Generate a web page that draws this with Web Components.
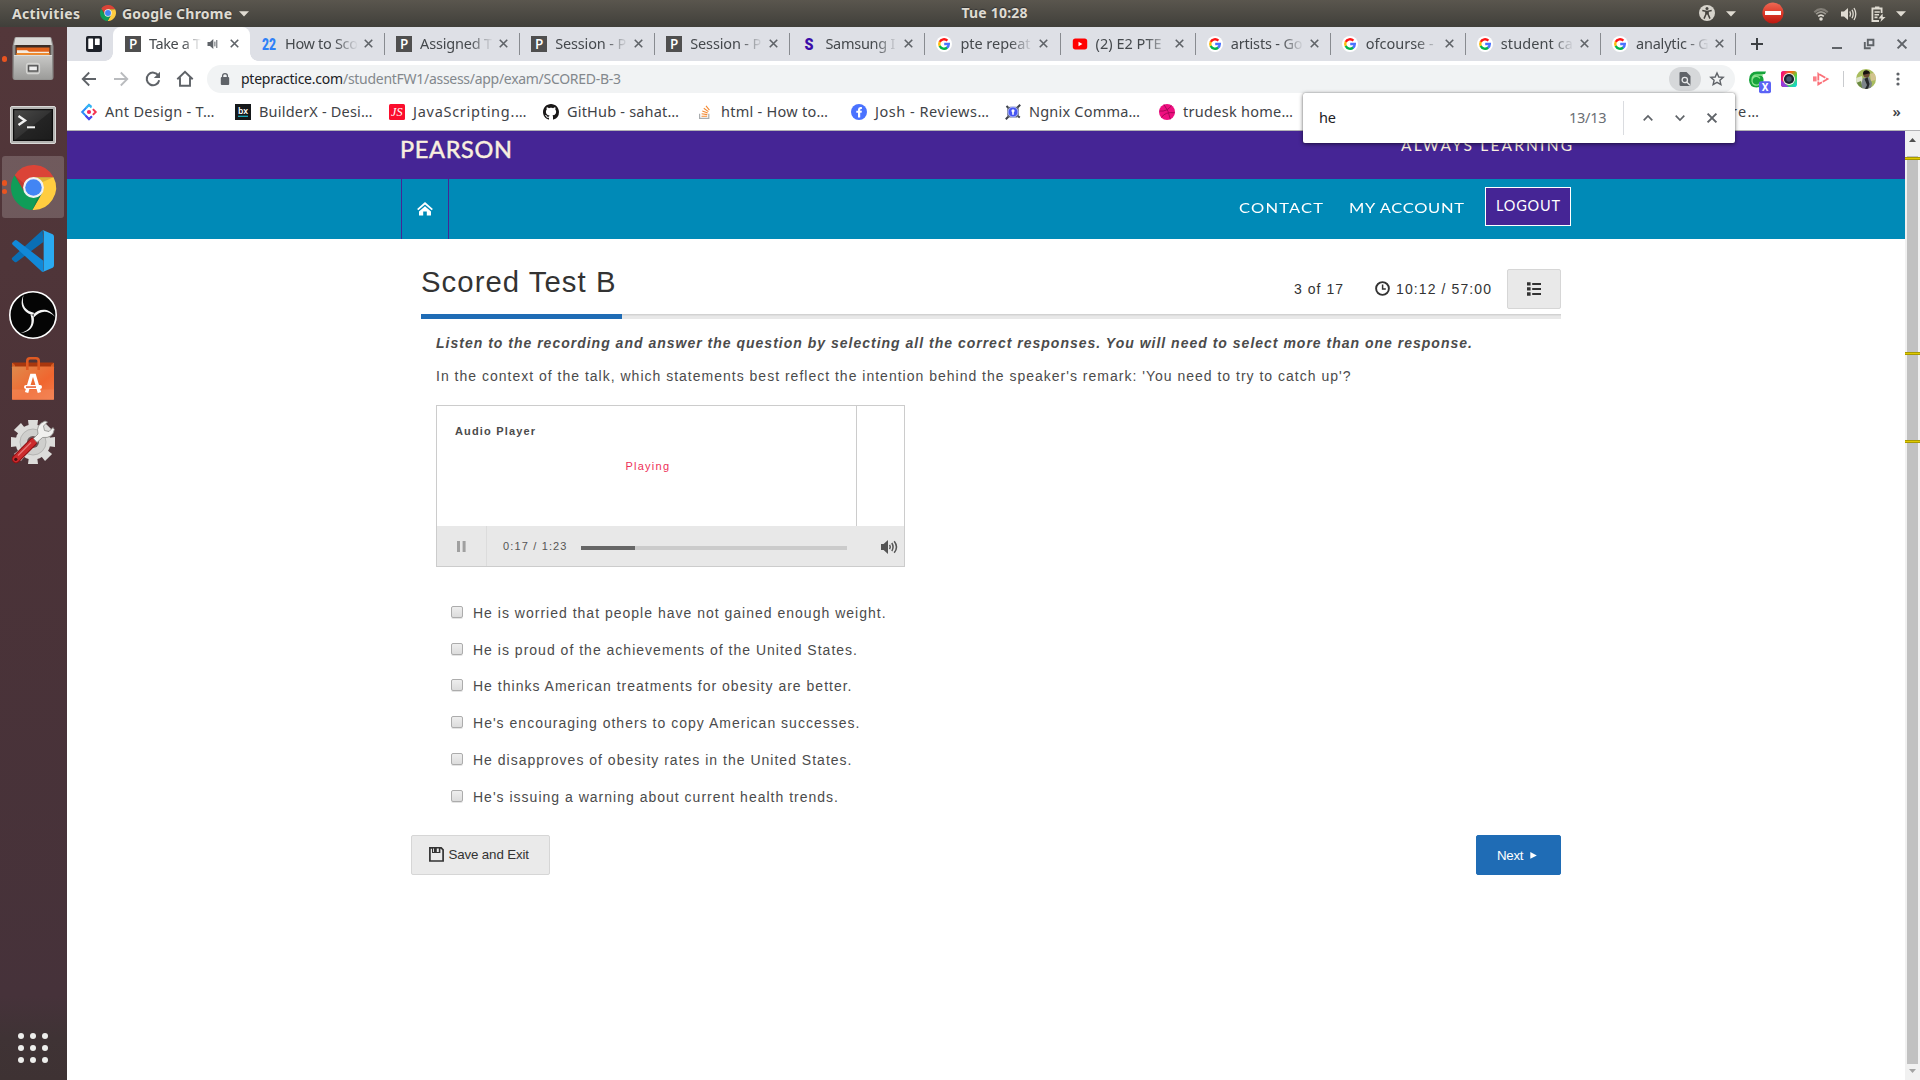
<!DOCTYPE html>
<html lang="en">
<head>
<meta charset="utf-8">
<title>Scored Test B</title>
<style>
html,body{margin:0;padding:0;width:1920px;height:1080px;overflow:hidden;background:#fff}
</style>
</head>
<body>
<desk-top></desk-top>
<script>
const UI = '"Noto Sans","Open Sans",sans-serif';
const TXT = '"Liberation Sans",Arial,sans-serif';

const CHROME = '<path fill="#db4437" d="M5.54 12.03A22 22 0 0 1 43.6 14H24V24L15.34 29Z"/><path fill="#ffcd40" d="M43.6 14A22 22 0 0 1 22.86 45.97L32.66 29 24 24V14Z"/><path fill="#0f9d58" d="M22.86 45.97A22 22 0 0 1 5.54 12.03L15.34 29 24 24 32.66 29Z"/><path fill="#000" opacity=".13" d="M24 14H43.6L33 18.5ZM15.34 29 5.54 12.03 17 22ZM32.66 29 22.86 45.97 28 33Z"/><circle cx="24" cy="24" r="10.2" fill="#f1f1f1"/><circle cx="24" cy="24" r="8.1" fill="#4285f4"/>';
const CLOSE = 'M4 4 12 12M12 4 4 12';

// name: [viewBox, markup]
const ICONS = {
  chrome: ['2 2 44 44', CHROME],
  caret: ['0 0 10 6', '<path fill="#dfdbd2" d="M0 .3H10L5 5.5Z"/>'],
  access: ['0 0 16 16', '<circle cx="8" cy="8" r="8" fill="#d6d3cb"/><circle cx="8" cy="3.6" r="1.5" fill="#45433e"/><path d="M3.3 5.6 8 6.6 12.7 5.6M8 6.5V9.5M6.9 6.6V9.4L5 13.6M9.1 6.6V9.4L11 13.6" stroke="#45433e" stroke-width="1.5" fill="none"/>'],
  stop: ['0 0 22 22', '<defs><linearGradient id="a" x2="0" y2="1"><stop stop-color="#ee6a55"/><stop offset=".5" stop-color="#dd3a2a"/><stop offset="1" stop-color="#bb1710"/></linearGradient></defs><circle cx="11" cy="11" r="10.6" fill="url(#a)"/><rect x="3" y="9" width="16" height="4" fill="#fff"/>'],
  wifi: ['0 0 16 14', '<g fill="none" stroke="#dfdbd2"><path d="M1.3 5.2Q8-1 14.7 5.2" stroke-width="2" opacity=".35"/><path d="M3.2 7.2Q8 2.6 12.8 7.2" stroke-width="1.8" opacity=".55"/><path d="M5.2 9.3Q8 6.8 10.8 9.3" stroke-width="1.7"/></g><circle cx="8" cy="12" r="1.8" fill="#dfdbd2"/>'],
  sound: ['0 0 16 14', '<path fill="#dfdbd2" d="M0 4.5H3L7 1V13L3 9.5H0Z"/><g fill="none" stroke="#dfdbd2" stroke-width="1.3"><path d="M8.8 4.4Q10.4 7 8.8 9.6"/><path d="M11 2.7Q13.4 7 11 11.3"/><path d="M13 1Q16.6 7 13 13"/></g>'],
  battery: ['0 0 15 16', '<path fill="none" stroke="#dfdbd2" stroke-width="1.8" d="M8 15H1.4V2.5H10.6V7"/><path d="M4 1.2H8.4M3.5 6H8.8M3.5 8.7H8M3.5 11.4H6.5" stroke="#dfdbd2" stroke-width="1.6"/><path fill="#dfdbd2" d="M11.5 7.5 7.6 12.4H10.4L9.4 16 14.6 11H11.8Z"/>'],
  files: ['0 0 42 44', '<defs><linearGradient id="a" x2="0" y2="1"><stop stop-color="#c9c9c7"/><stop offset="1" stop-color="#9b9b99"/></linearGradient></defs><path fill="#8e8d8b" d="M2 2.5Q2 0 4 0H38Q40 0 40 2.5L41.5 9V40Q41.5 43 39 43H3Q.5 43 .5 40V9Z"/><path fill="#d9d9d7" d="M3.5.6H38.5L40 8H2Z"/><path fill="#3c2d25" d="M3.5 8H38.5V20H3.5Z"/><path fill="#e2641c" d="M4.5 10.5H37.5V20H4.5Z"/><path fill="#f5ece0" d="M5 13.2H15L17 14.8H37V16.5H5Z"/><path fill="#ec8a30" d="M4.5 16H37.5V20H4.5Z"/><path fill="url(#a)" d="M2 18H40V41Q40 42.5 38.5 42.5H3.5Q2 42.5 2 41Z"/><path d="M2 18.5H40" stroke="#dededc"/><rect x="14.5" y="26.3" width="13" height="10.4" rx="2.5" fill="#b7b7b5" stroke="#d5d5d3" stroke-width="1.2"/><rect x="16.6" y="28.8" width="9" height="5.2" fill="#eee" stroke="#555" stroke-width="1.4"/>'],
  terminal: ['0 0 46 38', '<defs><linearGradient id="a" x2="1" y2="1"><stop stop-color="#4a4a49"/><stop offset=".5" stop-color="#333"/><stop offset=".52" stop-color="#242424"/><stop offset="1" stop-color="#1c1c1c"/></linearGradient></defs><rect x=".5" y=".5" width="45" height="37" rx="1.5" fill="#b3b3b1" stroke="#dadad8"/><rect x="3.6" y="3.6" width="38.8" height="30.8" fill="url(#a)" stroke="#0c0c0c" stroke-width="1.2"/><path d="M8.5 10 15 14.5 8.5 19" stroke="#f2f2f2" stroke-width="2.4" fill="none"/><path d="M17 21.3H25" stroke="#f2f2f2" stroke-width="2"/>'],
  vscode: ['0 0 126 126', '<path fill="#0a6fb5" d="M92 0 0 84Q-2 88 2 91L8 96Q11 98 15 95L94 36Z"/><path fill="#1189d8" d="M3 36 9 31Q12 29 16 32L94 92V126L90 125 2 44Q-2 40 3 36Z"/><path fill="#2aaaf2" d="M92 0 122 13Q126 15 126 20V106Q126 111 122 113L92 126Q95 124 95 119V7Q95 2 92 0Z"/>'],
  obs: ['-24 -24 48 48', '<circle r="23.2" fill="#050505" stroke="#fff" stroke-width="1.6"/><g fill="#f4f4f4"><path d="M-9.5-20C-15-8-7-1.8-1 0L1.5-2C-7-4-12-9-9.5-20Z"/><path d="M-9.5-20C-15-8-7-1.8-1 0L1.5-2C-7-4-12-9-9.5-20Z" transform="rotate(120)"/><path d="M-9.5-20C-15-8-7-1.8-1 0L1.5-2C-7-4-12-9-9.5-20Z" transform="rotate(240)"/></g>'],
  software: ['0 0 42 44', '<defs><linearGradient id="a" x2="1" y2="1"><stop stop-color="#e08a4c"/><stop offset=".6" stop-color="#f0662f"/><stop offset="1" stop-color="#f27a4a"/></linearGradient></defs><path fill="#a8370e" d="M1 5.5H41L42 10H0Z"/><path fill="#d35b22" d="M0 5.5 3 8V10H0ZM42 5.5 39 8V10H42Z"/><rect y="9.5" width="42" height="33.2" rx=".8" fill="url(#a)"/><rect y="32.5" width="42" height="10.2" fill="#f59064" opacity=".45"/><path d="M15.3 13V4Q15.3 1.2 18 1.2H24Q26.7 1.2 26.7 4V13" fill="none" stroke="#e05a22" stroke-width="2.6"/><path d="M14.6 35.5 19.6 18.5H22.4L27.4 35.5" fill="none" stroke="#fff" stroke-width="3.4"/><rect x="12" y="28" width="18" height="4" rx="2" fill="#fff"/><rect x="14" y="29.3" width="10" height="1.5" fill="#e8592a"/>'],
  settings: ['0 0 44 44', '<g fill="#dcdcda"><circle cx="22" cy="22" r="17.5"/><path d="M17 0H27L26 8H18ZM17 44H27L26 36H18ZM0 17V27L8 26V18ZM44 17V27L36 26V18Z"/><path d="M17 0H27L26 8H18ZM17 44H27L26 36H18ZM0 17V27L8 26V18ZM44 17V27L36 26V18Z" transform="rotate(45 22 22)"/></g><circle cx="22" cy="22" r="13" fill="#cfcfcd" stroke="#b5b5b3"/><circle cx="22" cy="22" r="6" fill="#6b5658"/><path d="M5 39 22 22" stroke="#8e1114" stroke-width="8.4" stroke-linecap="round"/><path d="M5 39 22 22" stroke="#cc2b2d" stroke-width="6.4" stroke-linecap="round"/><path d="M7 35.5 20 22.5" stroke="#e87878" stroke-width="1.2"/><circle cx="4.8" cy="39.3" r="1.6" fill="#4b1012"/><path fill="#f0f0ee" stroke="#8a8a88" stroke-width=".8" d="M22.5 18.5 27 14Q24.5 4.5 34 1L36.5 2 32.5 6 33.5 10.5 38 11.5 42 7.5 43.3 9.5Q42 18.5 31.5 17.5L26 22.5Z"/>'],
  trello: ['0 0 16 16', '<rect width="16" height="16" rx="2" fill="#1d2129"/><rect x="2.3" y="2.5" width="4.8" height="10.5" rx=".6" fill="#fff"/><rect x="8.9" y="2.5" width="4.8" height="6.6" rx=".6" fill="#fff"/>'],
  pearson: ['0 0 16 16', '<rect width="16" height="16" fill="#4f4f4f"/><text x="4" y="13" font-family="Open Sans" font-size="13.5" font-weight="600" fill="#fff">P</text>'],
  n22: ['0 0 16 16', '<text x="1" y="14" font-family="Roboto" font-size="17" font-weight="900" fill="#2f80f7" textLength="14" lengthAdjust="spacingAndGlyphs">22</text>'],
  samsung: ['0 0 16 16', '<text x="3.5" y="14" font-family="Roboto" font-size="17" font-weight="900" fill="#3a0ca8" textLength="9" lengthAdjust="spacingAndGlyphs">S</text>'],
  google: ['0 0 16 16', '<circle cx="8" cy="8" r="8" fill="#fff"/><g fill="none" stroke-width="2.4"><path stroke="#ff1717" d="M11.4 4.6A4.8 4.8 0 0 0 3.7 6"/><path stroke="#fdbc10" d="M3.8 5.7A4.9 4.9 0 0 0 3.8 10.3"/><path stroke="#00b44b" d="M3.7 10A4.8 4.8 0 0 0 11.2 11.5"/><path stroke="#4a72ff" d="M8.2 8H12.8Q12.8 10.3 11 11.7"/></g>'],
  youtube: ['0 0 16 16', '<rect x=".8" y="2.4" width="14.4" height="11" rx="2.6" fill="#f00"/><path fill="#fff" d="M6.5 5.7 10.4 8 6.5 10.2Z"/>'],
  close: ['0 0 16 16', `<path d="${CLOSE}" stroke="#5f6368" stroke-width="1.7"/>`],
  audio: ['0 0 12 12', '<path fill="#5f6368" d="M.5 4H3L6.3 1V11L3 8H.5Z"/><path d="M7.9 3.6V8.4M9.8 2V10" stroke="#5f6368" stroke-width="1"/>'],
  plus: ['0 0 16 16', '<path d="M8 2V14M2 8H14" stroke="#3c4043" stroke-width="2"/>'],
  min: ['0 0 16 16', '<path d="M3 12H13" stroke="#5f6368" stroke-width="2"/>'],
  restore: ['0 0 16 16', '<path d="M6.8 3.8H12.4V9.3H6.8ZM3.8 6V12.2H9.7" fill="none" stroke="#5f6368" stroke-width="1.9"/>'],
  wclose: ['0 0 16 16', '<path d="M3.6 3.6 12.4 12.4M12.4 3.6 3.6 12.4" stroke="#5f6368" stroke-width="2"/>'],
  back: ['0 0 16 16', '<path d="M15 8H2M8.2 1.5 1.7 8 8.2 14.5" fill="none" stroke="#5f6368" stroke-width="1.8"/>'],
  forward: ['0 0 16 16', '<path d="M1 8H14M7.8 1.5 14.3 8 7.8 14.5" fill="none" stroke="#b9bbbe" stroke-width="1.8"/>'],
  reload: ['0 0 16 16', '<path d="M13.4 4.6A6.3 6.3 0 1 0 14.2 9.2" fill="none" stroke="#5f6368" stroke-width="2"/><path fill="#5f6368" d="M15 .8V7H8.8Z"/>'],
  home: ['0 0 18 18', '<path d="M1.3 9.3 9 1.8 16.7 9.3M4 7.5V15.7H14V7.5" fill="none" stroke="#5f6368" stroke-width="1.9"/>'],
  lock: ['0 0 10 14', '<rect x=".8" y="5" width="8.4" height="8" rx="1" fill="#5f6368"/><path d="M2.6 5.5V3.8Q2.6 1.6 5 1.6T7.4 3.8V5.5" fill="none" stroke="#5f6368" stroke-width="1.3"/>'],
  finddoc: ['0 0 12 14', '<path fill="#5f6368" d="M1.5 0H7.5L11.5 4V12.5Q11.5 14 10 14H2Q.5 14 .5 12.5V1Q.5 0 1.5 0Z"/><circle cx="5.8" cy="8" r="2.7" fill="none" stroke="#e8e9ea" stroke-width="1.3"/><path d="M7.7 9.9 11 13.2" stroke="#e8e9ea" stroke-width="1.4"/>'],
  star: ['0 0 16 16', '<path fill="none" stroke="#5f6368" stroke-width="1.4" d="M8 2 9.8 6 14.2 6.4 10.9 9.3 11.9 13.6 8 11.3 4.1 13.6 5.1 9.3 1.8 6.4 6.2 6Z"/>'],
  ext1: ['0 0 24 24', '<path fill="#17a43c" d="M1 10Q1 1.5 9 1.5H18L17 4Q14 4 13 5Q16 7 15.5 11 15 17.5 8.5 17.5 1.5 17.5 1 10Z"/><path d="M12 8.3A4.4 4.4 0 1 0 12.6 12M15 5H9Q4 5 4 10" fill="none" stroke="#8be28f" stroke-width="1.3"/><rect x="11" y="11.3" width="12" height="12" rx="2" fill="#5b63f5"/><text x="17" y="21" text-anchor="middle" font-family="Roboto" font-size="10.5" font-weight="700" fill="#fff">X</text>'],
  ext2: ['0 0 16 16', '<defs><linearGradient id="a" x2="1" y2="1"><stop stop-color="#f0138a"/><stop offset=".35" stop-color="#f86a10"/><stop offset=".6" stop-color="#5ad03a"/><stop offset="1" stop-color="#00d4f5"/></linearGradient><linearGradient id="b" x2="1" y2="0"><stop stop-color="#f30a7a"/><stop offset=".35" stop-color="#f30a7a" stop-opacity="0"/></linearGradient></defs><rect width="16" height="16" rx="2.8" fill="url(#a)"/><rect width="16" height="16" rx="2.8" fill="url(#b)"/><path fill="#8a3bf0" opacity=".85" d="M0 9V13Q0 16 3 16H8Z"/><circle cx="8" cy="8" r="6" fill="#f7f3f5"/><circle cx="8" cy="8" r="5.1" fill="#1c2733"/><circle cx="8" cy="8" r="2.7" fill="#45586e"/>'],
  ext3: ['0 0 16 14', '<rect y="4.4" width="3.6" height="5" fill="#fb8087"/><path fill="none" stroke="#fb7078" stroke-width="1.8" stroke-dasharray="7 1" d="M5.3 1.6V12.4L14.5 7Z"/>'],
  avatar: ['0 0 20 20', '<defs><clipPath id="c"><circle cx="10" cy="10" r="10"/></clipPath></defs><g clip-path="url(#c)"><rect width="20" height="20" fill="#a9bd5e"/><path fill="#dfe5cf" d="M0 9 6 7 7 14 2 20H0Z"/><path fill="#d3c48f" d="M14 5 20 3V11L15 12Z"/><path fill="#6c8b40" d="M0 14 5 12 7 20H0Z"/><path fill="#7d858a" d="M7 9 13 8 16 14 15 20H6L5.5 14Z"/><path fill="#26292c" d="M8.5 10 11 16 9 20H12L13.5 15 11.5 8Z"/><circle cx="10.4" cy="5.2" r="3.2" fill="#6b4a36"/><path fill="#17130f" d="M7 5Q7 1 10.5 1.2 14.3 1.6 13.8 5L13 4.6 7.8 5.8Z"/></g>'],
  dots: ['0 0 4 16', '<g fill="#5f6368"><circle cx="2" cy="3" r="1.6"/><circle cx="2" cy="8" r="1.6"/><circle cx="2" cy="13" r="1.6"/></g>'],
  ant: ['0 0 16 16', '<path d="M10.2 2.6 8 .9 1.2 8 8 15.1 10.5 12.6" fill="none" stroke="#2d8bfa" stroke-width="2"/><path d="M5 3.9 8 1.1 10.5 3.4" fill="none" stroke="#35b9f2" stroke-width="2"/><path d="M4.7 11.7 8 15 11 12.2" fill="none" stroke="#4d45ec" stroke-width="2"/><path d="M11.9 5.1 14.7 8 11.9 10.9" fill="none" stroke="#f5334f" stroke-width="2"/><circle cx="8" cy="8" r="2.1" fill="#f5265f"/>'],
  bx: ['0 0 16 16', '<rect width="16" height="16" fill="#15181a"/><text x="8" y="9.6" text-anchor="middle" font-family="Noto Sans" font-size="8.6" font-weight="600" fill="#fff">bx</text><rect x="3" y="11.7" width="10" height="1.2" fill="#1cb5c9"/>'],
  js: ['0 0 16 16', '<rect width="16" height="16" rx="1.5" fill="#fb0d2d"/><text x="2" y="12" font-family="Liberation Serif" font-style="italic" font-size="12.5" fill="#fff" textLength="11.5" lengthAdjust="spacingAndGlyphs">JS</text>'],
  github: ['0 0 16 16', '<path fill="#191717" d="M8 0C3.58 0 0 3.58 0 8c0 3.54 2.29 6.53 5.47 7.59.4.07.55-.17.55-.38 0-.19-.01-.82-.01-1.49-2.01.37-2.53-.49-2.69-.94-.09-.23-.48-.94-.82-1.13-.28-.15-.68-.52-.01-.53.63-.01 1.08.58 1.23.82.72 1.21 1.87.87 2.33.66.07-.52.28-.87.51-1.07-1.78-.2-3.64-.89-3.64-3.95 0-.87.31-1.59.82-2.15-.08-.2-.36-1.02.08-2.12 0 0 .67-.21 2.2.82.64-.18 1.32-.27 2-.27s1.36.09 2 .27c1.53-1.04 2.2-.82 2.2-.82.44 1.1.16 1.92.08 2.12.51.56.82 1.27.82 2.15 0 3.07-1.87 3.75-3.65 3.95.29.25.54.73.54 1.48 0 1.07-.01 1.93-.01 2.2 0 .21.15.46.55.38A8.01 8.01 0 0 0 16 8c0-4.42-3.58-8-8-8z"/>'],
  stack: ['0 0 16 16', '<path d="M2.6 9.8V14.3H11.8V9.8" fill="none" stroke="#a9acae" stroke-width="1.2"/><path d="M4.5 12.3H10.2M4.6 9.8 10.3 10.6M5.3 7 10.7 9M6.8 4.2 11.4 7.6M9 1.8 12.4 6.2" stroke="#f38a34" stroke-width="1.1"/>'],
  fb: ['0 0 16 16', '<circle cx="8" cy="8" r="8" fill="#4a72ff"/><path fill="#fff" d="M7 13.5V8.8H5.3V6.8H7V5.4Q7 2.9 9.4 2.9H10.9V4.9H10Q9.2 4.9 9.2 5.7V6.8H10.9L10.6 8.8H9.2V13.5Z"/>'],
  gear: ['0 0 16 16', '<path d="M.8 15.2 4 12M15.2.8 12 4M1.5 2 4 4.5M14.8 13.5 12 11.5" stroke="#3b3f4a" stroke-width="2"/><rect x="2.2" y="2.8" width="11.6" height="10.8" rx="3" fill="#676d7c"/><circle cx="8" cy="8" r="5" fill="#4757f2" stroke="#aeb8ff" stroke-width="1"/><circle cx="8" cy="6.8" r="1.6" fill="#fff"/><path d="M8 6V10.8" stroke="#fff" stroke-width="1.6"/>'],
  ball: ['0 0 16 16', '<circle cx="8" cy="8" r="8" fill="#ee0f80"/><path d="M.5 7Q8 8 12.5 1.5M5 .6Q10 7 11.3 15.2M2.5 13.5Q6 7.5 15.8 8.8" fill="none" stroke="#a90758" stroke-width="1"/>'],
  up: ['0 0 16 16', '<path d="M3.7 10.3 8 6 12.3 10.3" fill="none" stroke="#5f6368" stroke-width="1.7"/>'],
  down: ['0 0 16 16', '<path d="M3.7 5.7 8 10 12.3 5.7" fill="none" stroke="#5f6368" stroke-width="1.7"/>'],
  house: ['0 0 16 14', '<path d="M.7 7.6 8 1.2 15.3 7.6" fill="none" stroke="#fff" stroke-width="1.8"/><path fill="#fff" d="M8 4.2 14 9.5V13.6H9.8V9.6H6.2V13.6H2V9.5Z"/>'],
  clock: ['0 0 15 15', '<circle cx="7.5" cy="7.5" r="6.4" fill="none" stroke="#333" stroke-width="1.9"/><path d="M7.6 3.6V8H10.8" fill="none" stroke="#333" stroke-width="1.5"/>'],
  list: ['0 0 14 14', '<path fill="#333" d="M0 .2H3.6V3.6H0ZM0 5.2H3.6V8.6H0ZM0 10.3H3.6V13.7H0ZM5.2 1H14V3H5.2ZM5.2 6H14V8H5.2ZM5.2 11H14V13H5.2Z"/>'],
  pause: ['0 0 9 11', '<path fill="#a0a0a0" d="M0 0H3V11H0ZM5.6 0H8.6V11H5.6Z"/>'],
  volume: ['0 0 17 14', '<path fill="#555" d="M0 4H2.6L7 0V14L2.6 10H0Z"/><g fill="none" stroke="#555" stroke-width="1.5"><path d="M8.6 4.8Q10 7 8.6 9.2"/><path d="M10.8 3Q13.3 7 10.8 11"/><path d="M13.2 1.2Q17.8 7 13.2 12.8"/></g>'],
  floppy: ['0 0 15 15', '<path fill="none" stroke="#333" stroke-width="1.7" d="M.9.9H12.2L14.1 2.8V14H.9Z"/><path fill="#333" d="M3 1H11.4V6H3Z"/><path fill="#eaeaea" d="M7.8 1.6H9.8V5H7.8ZM4 1.6H4.9V5H4Z"/>'],
  play: ['0 0 7 7', '<path fill="#fff" d="M.3 0 6.8 3.4.3 6.8Z"/>'],
  grid: ['0 0 30 30', '<g fill="#eeeeec">' + [3,15,27].map(y=>[3,15,27].map(x=>`<circle cx="${x}" cy="${y}" r="3"/>`).join('')).join('') + '</g>'],
  sup: ['0 0 7 4', '<path fill="#505050" d="M3.5 0 7 4H0Z"/>'],
  sdown: ['0 0 7 4', '<path fill="#a3a3a3" d="M0 0H7L3.5 4Z"/>'],
};

function define(name, css, html, after) {
  customElements.define(name, class extends HTMLElement {
    constructor() { super(); this.attachShadow({mode: 'open'}); }
    connectedCallback() {
      const markup = typeof html === 'function' ? html(this) : html;
      this.shadowRoot.innerHTML = `<style>*{box-sizing:border-box}:host{box-sizing:border-box}${typeof css === 'function' ? css(this) : css}</style>${markup}`;
      if (after) after(this);
    }
  });
}

define('ui-icon', el => `:host{display:block;flex:none;width:${el.getAttribute('w') || 16}px;height:${el.getAttribute('h') || el.getAttribute('w') || 16}px}svg{display:block;width:100%;height:100%;overflow:visible}`,
  el => { const [box, body] = ICONS[el.getAttribute('name')]; return `<svg viewBox="${box}">${body}</svg>`; });

// A single line of text tracked out (or in) to an exact width; "stretch" widens the letterforms first.
const fitted = [];
define('fit-text', el => `:host{display:block;flex:none;white-space:pre;width:${el.getAttribute('w')}px}span{display:inline-block;transform-origin:0 50%}`,
  '<span><slot></slot></span>', el => fitted.push(el));
function fitAll() {
  for (const el of fitted) {
    const span = el.shadowRoot.querySelector('span');
    const n = el.textContent.length - 1;
    const k = +el.getAttribute('stretch') || 1;
    span.style.letterSpacing = '0px';
    span.style.letterSpacing = ((+el.getAttribute('w') / k - span.getBoundingClientRect().width) / n).toFixed(3) + 'px';
    if (k !== 1) span.style.transform = `scaleX(${k})`;
  }
}

define('top-panel', `:host{display:flex;height:27px;background:linear-gradient(#5a564e,#403f3a);color:#dfdbd2;font:700 14px/26px ${UI};padding-left:12px;align-items:center;text-shadow:0 -1px 1px #333}`,
`<fit-text w="68">Activities</fit-text><ui-icon name="chrome" w="16" style="margin:0 6px 2px 20px"></ui-icon><fit-text w="110">Google Chrome</fit-text><ui-icon name="caret" w="10" h="6" style="margin-left:7px"></ui-icon>
<fit-text w="66" style="margin:0 0 1px 712.5px">Tue 10:28</fit-text>
<ui-icon name="access" w="16" style="margin-left:671.5px;margin-bottom:1px"></ui-icon><ui-icon name="caret" w="10" h="6" style="margin-left:11px"></ui-icon>
<ui-icon name="stop" w="22" style="margin-left:26px;margin-bottom:1px"></ui-icon><ui-icon name="wifi" w="16" h="14" style="margin-left:29px"></ui-icon><ui-icon name="sound" w="16" h="14" style="margin-left:12px"></ui-icon><ui-icon name="battery" w="15" h="16" style="margin-left:14px"></ui-icon><ui-icon name="caret" w="10" h="6" style="margin-left:10px"></ui-icon>`);

define('dock-item', `:host{display:flex;position:relative;height:64px;width:67px;flex:none;align-items:center;justify-content:center;padding-right:1px}
:host([active])::before{content:"";position:absolute;left:2px;top:1px;width:62px;height:62px;border-radius:3px;background:rgba(255,255,255,.18)}
ui-icon{position:relative}.d{position:absolute;left:2px;top:0;height:100%;display:flex;flex-direction:column;justify-content:center;gap:3px}.d i{width:5.4px;height:5.4px;border-radius:50%;background:#e95420}`,
el => `<div class="d">${'<i></i>'.repeat(+el.getAttribute('running') || 0)}</div><slot></slot>`);

define('app-dock', `:host{display:flex;flex-direction:column;width:67px;flex:none;background:linear-gradient(#53373a,#4b3338 45%,#46323a 92%,#3f3335 96%,#3e3233);height:1053px}.g{margin:auto 0 17px 18px}ui-icon{z-index:1}`,
`<dock-item running="1"><ui-icon name="files" w="42" h="44"></ui-icon></dock-item>
<dock-item><ui-icon name="terminal" w="46" h="38" style="margin-top:4px"></ui-icon></dock-item>
<dock-item active running="2"><ui-icon name="chrome" w="45"></ui-icon></dock-item>
<dock-item><ui-icon name="vscode" w="42"></ui-icon></dock-item>
<dock-item><ui-icon name="obs" w="48"></ui-icon></dock-item>
<dock-item><ui-icon name="software" w="42" h="44"></ui-icon></dock-item>
<dock-item><ui-icon name="settings" w="44" style="margin-bottom:2px"></ui-icon></dock-item>
<ui-icon class="g" name="grid" w="30"></ui-icon>`);

define('browser-tab', `:host{display:flex;width:135.1px;height:34px;flex:none;align-items:center;color:#45494d;font:14.5px/32px ${UI};border-right:1px solid transparent;
border-image:linear-gradient(transparent 7px,#888b90 7px 27px,transparent 27px) 1}
:host([active]){border-image:none;border:0;width:137px;background:#fff;border-radius:8px 8px 0 0;position:relative}
:host([active])::before,:host([active])::after{content:"";position:absolute;bottom:0;width:8px;height:8px;background:radial-gradient(circle at 0 0,transparent 7.5px,#fff 8px)}
:host([active])::before{left:-8px}:host([active])::after{right:-8px;background:radial-gradient(circle at 100% 0,transparent 7.5px,#fff 8px)}
.t{margin-left:8px;height:34px;width:73px;overflow:hidden;-webkit-mask-image:linear-gradient(90deg,#000 50px,transparent 73px)}
:host([active]) .t{width:52px;-webkit-mask-image:linear-gradient(90deg,#000 34px,transparent 52px)}`,
el => `<ui-icon name="${el.getAttribute('icon')}" style="margin:0 0 1px ${el.hasAttribute('active') ? 12 : 11}px"></ui-icon><div class="t"><fit-text w="${el.getAttribute('w')}">${el.getAttribute('label')}</fit-text></div>${el.hasAttribute('active') ? '<ui-icon name="audio" w="12" style="margin:0 0 1px 6px"></ui-icon><ui-icon name="close" w="15" style="margin:0 0 1px 7.5px"></ui-icon>' : '<ui-icon name="close" w="15" style="margin:0 0 1px 3px"></ui-icon>'}`);

const TABS = [['n22','How to Sco',73],['pearson','Assigned T',72],['pearson','Session - P',71],['pearson','Session - P',71],['samsung','Samsung I',70],['google','pte repeat',70],['youtube','(2) E2 PTE',66],['google','artists - Go',72],['google','ofcourse -',68],['google','student ca',72],['google','analytic - G',73]];
define('tab-strip', `:host{display:flex;height:34px;background:#dee0e6;align-items:center}`,
`<ui-icon name="trello" style="margin:0 11px 1px 19px"></ui-icon><browser-tab active icon="pearson" label="Take a T" w="52"></browser-tab>${TABS.map(t => `<browser-tab icon="${t[0]}" label="${t[1]}" w="${t[2]}"></browser-tab>`).join('')}
<ui-icon name="plus" style="margin-left:13px"></ui-icon><ui-icon name="min" style="margin-left:64px"></ui-icon><ui-icon name="restore" style="margin-left:16px"></ui-icon><ui-icon name="wclose" style="margin-left:17px"></ui-icon>`);

define('tool-bar', `:host{display:flex;height:36px;background:#fff;align-items:center;padding-left:14px}
.o{display:flex;width:1528px;height:28px;margin:0 0 0 13px;border-radius:14px;background:#f1f3f4;align-items:center;font:14px/28px ${UI};color:#83888d}
.h{color:#202124}.p{width:32px;height:24px;border-radius:12px;background:#d6d8da;display:flex;align-items:center;justify-content:center}.sep{width:1px;height:16px;background:#c9cbce}`,
`<ui-icon name="back"></ui-icon><ui-icon name="forward" style="margin-left:16px"></ui-icon><ui-icon name="reload" style="margin-left:16px"></ui-icon><ui-icon name="home" w="18" style="margin-left:15px"></ui-icon>
<div class="o"><ui-icon name="lock" w="10" h="14" style="margin:0 11px 0 13px"></ui-icon><fit-text class="h" w="102">ptepractice.com</fit-text><fit-text w="278">/studentFW1/assess/app/exam/SCORED-B-3</fit-text><div class="p" style="margin-left:auto"><ui-icon name="finddoc" w="12" h="14"></ui-icon></div><ui-icon name="star" style="margin:0 10px 0 8px"></ui-icon></div>
<ui-icon name="ext1" w="24" style="margin:5px 0 0 12.5px"></ui-icon><ui-icon name="ext2" style="margin-left:9px"></ui-icon><ui-icon name="ext3" h="14" style="margin-left:16px"></ui-icon><div class="sep" style="margin-left:14.5px"></div><ui-icon name="avatar" w="20" style="margin-left:12px"></ui-icon><ui-icon name="dots" w="4" h="16" style="margin-left:20px"></ui-icon>`);

define('book-mark', `:host{display:flex;width:154px;flex:none;align-items:center;gap:8px}fit-text{margin-bottom:2px}`,
el => `<ui-icon name="${el.getAttribute('icon')}"></ui-icon><fit-text w="${el.getAttribute('w')}">${el.getAttribute('label')}</fit-text>`);
const MARKS = [['ant','Ant Design - T…',109.5],['bx','BuilderX - Desi…',113.5],['js','JavaScripting.…',113.5],['github','GitHub - sahat…',112],['stack','html - How to…',107],['fb','Josh - Reviews…',114],['gear','Ngnix Comma…',111],['ball','trudesk home…',110]];
define('bookmarks-bar', `:host{display:flex;height:34px;background:#fff;border-bottom:1px solid #b2b2b5;align-items:center;padding:0 0 3px 14px;font:14.5px/30px ${UI};color:#3f4347}`,
`${MARKS.map(m => `<book-mark icon="${m[0]}" label="${m[1]}" w="${m[2]}"></book-mark>`).join('')}<fit-text w="28" style="margin:0 0 2px 418px">re…</fit-text><span style="margin:0 0 2px 133.5px;font-weight:600">»</span>`);

define('find-bar', `:host{position:absolute;left:1303px;top:93px;width:432px;height:50px;display:flex;align-items:center;background:#fff;border-radius:2px;box-shadow:0 1px 4px rgba(0,0,0,.55),0 0 1px rgba(0,0,0,.5);font:14.5px/50px ${UI};color:#202124;padding-left:16px;z-index:2}fit-text{margin-bottom:2px}.c{color:#6a6e73;margin-left:233px}.s{width:1px;height:34px;background:#dadce0;margin-left:16px}`,
`<fit-text w="17">he</fit-text><fit-text class="c" w="37.5">13/13</fit-text><div class="s"></div><ui-icon name="up" style="margin-left:16px"></ui-icon><ui-icon name="down" style="margin-left:16px"></ui-icon><ui-icon name="wclose" style="margin-left:16px"></ui-icon>`);

define('site-header', `:host{display:block;color:#fff}
.a{height:48px;background:#452595;display:flex;padding-left:333px;color:#f9efdf}
.logo{font:400 23.5px/24px Lato,sans-serif;padding-top:6px;-webkit-text-stroke:.5px #f9efdf}.tag{font:15.5px/20px Lato,sans-serif;margin:4px 0 0 889px}
.b{height:60px;background:#008ab7;display:flex;padding-left:334px}
.h{width:48px;border:1px solid #452595;border-width:0 1px;display:flex;justify-content:center;padding-top:23px}
.n{font:14px/20px Lato,sans-serif;margin-top:19px}.out{width:86px;height:39px;border:1px solid #fff;background:#452595;margin:8px 0 0 20px;font:14.5px/36px Lato,sans-serif;padding-left:10px}`,
`<div class="a"><fit-text class="logo" w="112">PEARSON</fit-text><fit-text class="tag" w="171">ALWAYS LEARNING</fit-text></div>
<div class="b"><div class="h"><ui-icon name="house" h="14"></ui-icon></div><fit-text class="n" w="84" stretch="1.18" style="margin-left:790px">CONTACT</fit-text><fit-text class="n" w="115" stretch="1.18" style="margin-left:26px">MY ACCOUNT</fit-text><div class="out" style="margin-left:21px"><fit-text w="64">LOGOUT</fit-text></div></div>`);

define('test-head', `:host{display:block;margin-left:354px;width:1140px;font:14px/20px ${TXT};color:#333}
.r{display:flex;height:75px}.t{font-size:29.3px;line-height:34px;margin-top:26px}.m{margin-top:40px}
.btn{width:54px;height:40px;margin:30px 0 0 16px;border:1px solid #d6d6d6;border-radius:2px;background:#e9e9e9;display:flex;align-items:center;justify-content:center}
.p{height:5px;background:linear-gradient(#d2d2d2 1px,#dedede 1px 2px,#e8e8e8 2px)}.p div{width:201px;height:5px;background:#1f6cb5}`,
`<div class="r"><fit-text class="t" w="194.5">Scored Test B</fit-text><fit-text class="m" w="49" style="margin-left:678.5px">3 of 17</fit-text><ui-icon name="clock" w="15" style="margin:42px 6px 0 32px"></ui-icon><fit-text class="m" w="95">10:12 / 57:00</fit-text><div class="btn"><ui-icon name="list" w="14"></ui-icon></div></div><div class="p"><div></div></div>`);

define('audio-player', `:host{display:flex;flex-direction:column;width:469px;height:162px;border:1px solid #ccc;font:11px/14px ${TXT};color:#555}
.top{height:120px;width:420px;border-right:1px solid #ccc}.top b{display:block;margin:18px 0 0 18px;width:80px;color:#4b4b4b}.pl{margin:21px 0 0 188.5px;color:#ee2f57}
.c{height:40px;background:#e8e8e8;display:flex;align-items:center}.pa{width:50px;height:40px;border-right:1px solid #dcdcdc;padding:15px 0 0 20px}
.tr{width:266px;height:4px;background:#cbcbcb;margin:4px 0 0 15px}.tr div{width:54px;height:4px;background:#666}`,
`<div class="top"><b><fit-text w="80">Audio Player</fit-text></b><fit-text class="pl" w="43.5">Playing</fit-text></div>
<div class="c"><div class="pa"><ui-icon name="pause" w="9" h="11"></ui-icon></div><fit-text w="63.5" style="margin-left:16px">0:17 / 1:23</fit-text><div class="tr" style="margin-left:14.5px"><div></div></div><ui-icon name="volume" w="17" h="14" style="margin:2px 0 0 33.5px"></ui-icon></div>`);

define('answer-option', `:host{display:flex;height:36.8px;align-items:flex-start}.b{width:12px;height:12px;border:1px solid #acacac;border-radius:2px;background:linear-gradient(#eee,#dcdcdc);box-shadow:0 1px 0 #e4e4e4;margin:3px 10px 0 0}`,
el => `<div class="b"></div><fit-text w="${el.getAttribute('w')}">${el.textContent}</fit-text>`);

define('page-button', `:host{display:flex;height:40px;align-items:center;border:1px solid #d6d6d6;border-radius:2px;background:#eaeaea;color:#333;font:13.33px/38px ${TXT}}:host([primary]){background:#1f6cb5;border-color:#1f6cb5;color:#fff}`, '<slot></slot>');

define('test-body', `:host{display:block;margin-left:369px;font:14px/20px ${TXT};color:#4b4b4b}
.i{font-weight:700;font-style:italic;margin-top:14px}.q{margin:13px 0 19px}.o{margin:35.8px 0 0 15px}
.f{display:flex;justify-content:space-between;margin:11.4px 0 0 -25px;width:1150px}`,
`<fit-text class="i" w="1036">Listen to the recording and answer the question by selecting all the correct responses. You will need to select more than one response.</fit-text>
<fit-text class="q" w="914.5">In the context of the talk, which statements best reflect the intention behind the speaker's remark: 'You need to try to catch up'?</fit-text>
<audio-player></audio-player>
<div class="o"><answer-option w="412.5">He is worried that people have not gained enough weight.</answer-option><answer-option w="384">He is proud of the achievements of the United States.</answer-option><answer-option w="378.5">He thinks American treatments for obesity are better.</answer-option><answer-option w="386.5">He's encouraging others to copy American successes.</answer-option><answer-option w="378.5">He disapproves of obesity rates in the United States.</answer-option><answer-option w="365">He's issuing a warning about current health trends.</answer-option></div>
<div class="f"><page-button style="width:139px;padding-left:16.5px"><ui-icon name="floppy" w="15"></ui-icon><fit-text w="80.5" style="margin-left:5px">Save and Exit</fit-text></page-button><page-button primary style="width:85px;padding-left:20px"><fit-text w="26.5" style="margin-top:2px">Next</fit-text><ui-icon name="play" w="7" style="margin:1px 0 0 6px"></ui-icon></page-button></div>`);

define('scroll-rail', `:host{position:relative;display:flex;flex-direction:column;width:15px;height:949px;flex:none;background:#f1f1f1;align-items:center;padding:7px 0 7px}
.th{width:11px;height:908px;background:#c1c1c1;margin:auto 0 5px}
.m{position:absolute;left:0;width:15px;height:3px;background:#dfc900;border:1px solid #a89a00;border-width:1px 0}`,
`<ui-icon name="sup" w="7" h="4"></ui-icon><div class="th"></div><ui-icon name="sdown" w="7" h="4"></ui-icon><div class="m" style="top:26px"></div><div class="m" style="top:221px"></div><div class="m" style="top:309px"></div>`);

define('desk-top', `:host{display:block;width:1920px;height:1080px;position:relative;overflow:hidden}.m{display:flex}.w{width:1853px}.v{display:flex;height:949px;background:#fff}.pg{width:1838px}`,
`<top-panel></top-panel><div class="m"><app-dock></app-dock><div class="w"><tab-strip></tab-strip><tool-bar></tool-bar><bookmarks-bar></bookmarks-bar><div class="v"><div class="pg"><site-header></site-header><test-head></test-head><test-body></test-body></div><scroll-rail></scroll-rail></div></div></div><find-bar></find-bar>`);
fitAll();
</script>
</body>
</html>
